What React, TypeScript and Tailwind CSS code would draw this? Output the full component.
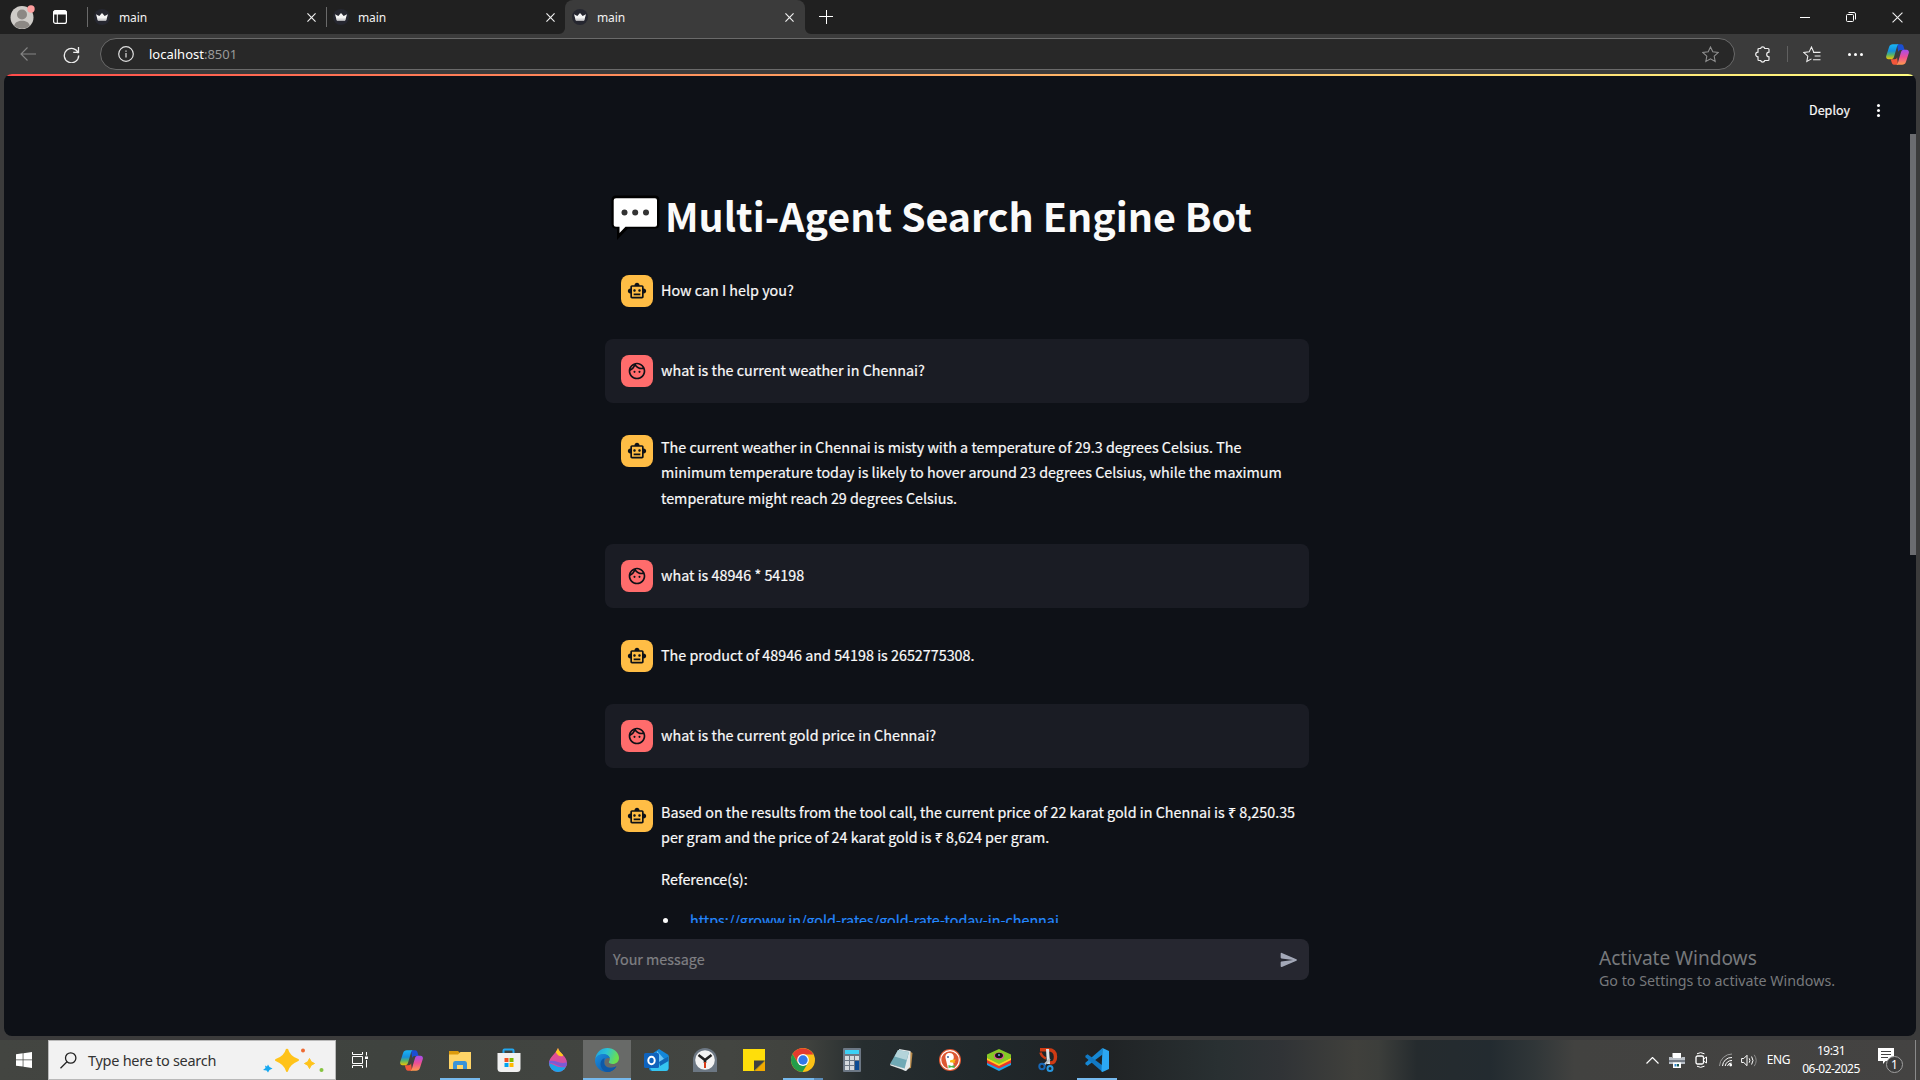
import React from "react";
import { MdOutlineFace, MdOutlineSmartToy } from "react-icons/md";

const chatFont = "font-['Noto_Sans_CJK_SC','Noto_Sans',sans-serif]";

function CrownIcon() {
  return (
    <svg width="16" height="16" viewBox="0 0 16 16" className="shrink-0">
      <circle cx="8" cy="8" r="8" fill="#262730" />
      <path d="M2 5.2 5.3 7 8 4l2.700 3L14 5.200 12.200 11.600H3.800Z" fill="#f5f5f5" />
      <path d="M3.600 9.400h8.800l-.4 2.200H4z" fill="#d2d2d4" />
    </svg>
  );
}

function CloseIcon({ size = 9, stroke = 1.3 }: { size?: number; stroke?: number }) {
  return (
    <svg width={size} height={size} viewBox="0 0 10 10" className="shrink-0">
      <path d="M.5.5l9 9M9.5.5l-9 9" stroke="#f0f0f0" strokeWidth={stroke} />
    </svg>
  );
}

function Tab({ active = false, divider = false }: { active?: boolean; divider?: boolean }) {
  return (
    <div
      className={
        active
          ? "relative flex h-[34px] w-[240px] items-center rounded-t-lg bg-[#3b3b3b] pr-[11px] pl-[7px]"
          : "flex h-[34px] w-[239px] items-center pr-[10px]"
      }
    >
      {divider && <div className="mr-[6px] h-5 w-px bg-[#6a6a6a]" />}
      {active && (
        <>
          <svg width="6" height="6" viewBox="0 0 6 6" className="absolute bottom-0 -left-[6px]">
            <path d="M6 0v6H0A6 6 0 0 0 6 0" fill="#3b3b3b" />
          </svg>
          <svg width="6" height="6" viewBox="0 0 6 6" className="absolute -right-[6px] bottom-0">
            <path d="M0 0v6h6A6 6 0 0 1 0 0" fill="#3b3b3b" />
          </svg>
        </>
      )}
      <CrownIcon />
      <span className="mt-px ml-[9px] flex-1 text-[12px] leading-4 tracking-[-0.1px] text-[#f2f2f2]">main</span>
      <CloseIcon />
    </div>
  );
}

function CopilotIcon({ id }: { id: string }) {
  return (
    <svg width="23" height="21" viewBox="0 0 23 21" className="shrink-0">
      <defs>
        <linearGradient id={id + "a"} x1="0" y1="0" x2="0" y2="1">
          <stop offset="0" stopColor="#19b5f5" />
          <stop offset=".45" stopColor="#1590dc" />
          <stop offset=".7" stopColor="#56b36a" />
          <stop offset="1" stopColor="#f5c400" />
        </linearGradient>
        <linearGradient id={id + "b"} x1="0" y1="0" x2="0" y2="1">
          <stop offset="0" stopColor="#a34df0" />
          <stop offset=".5" stopColor="#ee4f93" />
          <stop offset="1" stopColor="#ff9a4d" />
        </linearGradient>
      </defs>
      <path d="M11 .3h4.200c1.500 0 2 1 2.500 2.600l.9 3h-4c-1.300 0-1.900.8-2.300 2z" fill="#1b4fd3" />
      <path d="M12 20.700H8c-1.500 0-2-1-2.500-2.600l-.7-2.800h4c1.300 0 1.900-.8 2.300-2z" fill="#f2563a" />
      <path d="M6.800.3H13c-1.400.2-1.800 1.500-2.200 3L8.200 12.300c-.5 1.900-1.300 3-3.400 3H2.500C.5 15.300-.2 13.600.2 12L3 3.200C3.700 1 5 .3 6.800.3" fill={"url(#" + id + "a)"} />
      <path d="M16.200 20.700H10c1.400-.2 1.800-1.500 2.200-3l2.600-9c.5-1.900 1.300-3 3.400-3h2.300c2 0 2.700 1.700 2.300 3.300L20 17.800c-.7 2.200-2 2.900-3.800 2.900" fill={"url(#" + id + "b)"} />
    </svg>
  );
}

const starPath = "M8 .9l2.150 4.600 5 .65-3.700 3.450.95 5L8 12.150 3.600 14.600l.95-5L.85 6.150l5-.65z";

function TitleBar() {
  return (
    <div className="flex h-[34px] items-center bg-[#202020]">
      <div className="flex w-[87px] items-center pl-[10px]">
        <svg width="25" height="26" viewBox="0 0 25 26">
          <circle cx="12" cy="13.500" r="11.500" fill="#cfccc8" />
          <circle cx="12" cy="10.500" r="5" fill="#8c8884" />
          <path d="M4.200 21.800c.8-3.600 4-5 7.800-5s7 1.400 7.800 5a11.500 11.500 0 0 1-15.600 0" fill="#8c8884" />
          <circle cx="21" cy="5" r="3.700" fill="#ff9e9e" />
        </svg>
        <svg width="14" height="14" viewBox="0 0 14 14" className="ml-[18px]">
          <rect x=".6" y=".6" width="12.800" height="12.800" rx="2" fill="none" stroke="#fff" strokeWidth="1.200" />
          <path d="M1 1h12v3H1zM4.300 3v10" fill="#fff" stroke="#fff" strokeWidth="1" />
        </svg>
      </div>
      <Tab divider />
      <Tab divider />
      <Tab active />
      <svg width="14" height="14" viewBox="0 0 14 14" className="ml-[14px]">
        <path d="M0 6.500h14M7.500 0v14" stroke="#fff" />
      </svg>
      <div className="ml-auto flex items-center text-white">
        <div className="flex w-[46px] justify-center">
          <div className="h-px w-[10px] bg-white" />
        </div>
        <div className="flex w-[46px] justify-center">
          <svg width="10" height="10" viewBox="0 0 10 10" fill="none" stroke="#fff">
            <rect x=".5" y="2.500" width="7" height="7" rx="1" />
            <path d="M2.500.5H8A1.500 1.500 0 0 1 9.500 2v5.500" />
          </svg>
        </div>
        <div className="flex w-[46px] justify-center">
          <CloseIcon size={11} stroke={1} />
        </div>
      </div>
    </div>
  );
}

function Toolbar() {
  return (
    <div className="flex h-[40px] items-center bg-[#3b3b3b]">
      <div className="flex w-[100px] shrink-0 items-center pl-[20px]">
        <svg width="16" height="14" viewBox="0 0 16 14" fill="none" stroke="#858585" strokeWidth="1.100">
          <path d="M16 7H1M7.500.5 1 7l6.500 6.500" />
        </svg>
        <svg width="17" height="17" viewBox="0 0 17 17" fill="none" stroke="#ededed" strokeWidth="1.300" className="ml-[27px]">
          <path d="M15.300 7.200A7.200 7.200 0 1 0 15.700 9.500M15.500 1v5.300h-5.300" />
        </svg>
      </div>
      <div className="flex h-8 w-[1635px] shrink-0 items-center rounded-full border border-[#6a6a6a] bg-[#282828] pr-[15px] pl-[17px]">
        <svg width="16" height="16" viewBox="0 0 16 16" fill="none" stroke="#e0e0e0" strokeWidth="1.200">
          <circle cx="8" cy="8" r="7.300" />
          <path d="M8 7v4.500M8 4.400v1.400" />
        </svg>
        <span className="ml-[15px] flex-1 text-[13px] leading-5 text-white">
          localhost<span className="text-[#9a9a9a]">:8501</span>
        </span>
        <svg width="17" height="17" viewBox="0 0 16 16" fill="none" stroke="#8f8f8f">
          <path d={starPath} />
        </svg>
      </div>
      <svg width="16" height="17" viewBox="0 0 16 17" fill="none" stroke="#f0f0f0" strokeWidth="1.200" className="ml-[20px] shrink-0">
        <path d="M4 2.500h1.600a2.200 2.200 0 0 1 4.200 0H13a1 1 0 0 1 1 1v2.700a2.300 2.300 0 0 0 0 4.600v2.700a1 1 0 0 1-1 1H9.800a2.200 2.200 0 0 1-4.200 0H4a1 1 0 0 1-1-1v-2.700a2.300 2.300 0 0 1 0-4.600V3.500a1 1 0 0 1 1-1" />
      </svg>
      <div className="ml-[16px] h-4 w-px shrink-0 bg-[#606060]" />
      <svg width="18" height="17" viewBox="0 0 17 16" fill="none" stroke="#f0f0f0" className="ml-[15px] shrink-0">
        <path d="M10 5.400 8 .9 5.850 5.500l-5 .65 3.700 3.450-.95 5L8 12.150M9.500 6h7M11 9.500h5.500M9.500 13h7" />
      </svg>
      <div className="ml-[27px] flex shrink-0 gap-[3px]">
        <div className="size-[3px] rounded-full bg-white" />
        <div className="size-[3px] rounded-full bg-white" />
        <div className="size-[3px] rounded-full bg-white" />
      </div>
      <div className="ml-[23px] shrink-0">
        <CopilotIcon id="tool" />
      </div>
    </div>
  );
}

function Message({ user = false, children }: { user?: boolean; children: React.ReactNode }) {
  return (
    <div className={user ? "flex shrink-0 gap-2 rounded-lg bg-[#1a1c24] p-4" : "flex shrink-0 gap-2 p-4"}>
      <div
        className={
          user
            ? "flex size-8 shrink-0 items-center justify-center rounded-lg bg-[#ff6c6c] text-[#0e1117]"
            : "flex size-8 shrink-0 items-center justify-center rounded-lg bg-[#ffbd45] text-[#0e1117]"
        }
      >
        {user ? <MdOutlineFace size={20} /> : <MdOutlineSmartToy size={20} />}
      </div>
      <div className="-mt-[1.200px] mb-[1.200px] flex flex-col justify-center gap-4 text-[14.330px] leading-[25.600px] whitespace-nowrap [-webkit-text-stroke:0.2px]">
        {children}
      </div>
    </div>
  );
}

function ChatPage() {
  return (
    <div className="relative mx-1 flex h-[962px] flex-col overflow-hidden rounded-lg bg-[#0e1117] text-[#fafafa]">
      <div className="h-[2px] shrink-0 bg-linear-to-r from-[#ff4b4b] to-[#fffd80]" />
      <div className={"flex h-[68px] shrink-0 items-center justify-end pr-[36px] text-[12.530px] [-webkit-text-stroke:0.2px] " + chatFont}>
        <span>Deploy</span>
        <div className="ml-[27px] flex flex-col gap-[2px]">
          <div className="size-[3px] rounded-full bg-white" />
          <div className="size-[3px] rounded-full bg-white" />
          <div className="size-[3px] rounded-full bg-white" />
        </div>
      </div>
      <div className={"ml-[601px] flex h-[779px] w-[704px] shrink-0 flex-col gap-4 overflow-hidden pt-[43px] " + chatFont}>
        <h1 className="flex h-[56px] shrink-0 items-start pt-[8px] pl-[6px]">
          <svg width="49" height="46" viewBox="0 0 49 46" className="shrink-0">
            <path d="M5 .5h39q4.500 0 4.500 4.500v24q0 4.500-4.500 4.500H17L6 45V33.500H5Q.5 33.500.5 29V5Q.5.500 5 .5Z" fill="#000" />
            <path d="M5 3.300h39q2 0 2 2v24.500q0 2-2 2H14.500L8.500 38v-6.200H5q-2.300 0-2.300-2V5.300q0-2 2.300-2Z" fill="#fff" />
            <circle cx="13.500" cy="17.500" r="3" fill="#333" />
            <circle cx="24.200" cy="17.500" r="3" fill="#333" />
            <circle cx="35" cy="17.500" r="3" fill="#333" />
          </svg>
          <span className="-mt-[6px] ml-[5px] text-[39.400px] leading-[52px] font-bold whitespace-nowrap">
            Multi-Agent Search Engine Bot
          </span>
        </h1>
        <Message>
          <p>How can I help you?</p>
        </Message>
        <Message user>
          <p>what is the current weather in Chennai?</p>
        </Message>
        <Message>
          <p>
            The current weather in Chennai is misty with a temperature of 29.3 degrees Celsius. The
            <br />
            minimum temperature today is likely to hover around 23 degrees Celsius, while the maximum
            <br />
            temperature might reach 29 degrees Celsius.
          </p>
        </Message>
        <Message user>
          <p>what is 48946 * 54198</p>
        </Message>
        <Message>
          <p>The product of 48946 and 54198 is 2652775308.</p>
        </Message>
        <Message user>
          <p>what is the current gold price in Chennai?</p>
        </Message>
        <Message>
          <p>
            Based on the results from the tool call, the current price of 22 karat gold in Chennai is ₹ 8,250.35
            <br />
            per gram and the price of 24 karat gold is ₹ 8,624 per gram.
          </p>
          <p>Reference(s):</p>
          <ul>
            <li className="flex items-center">
              <span className="ml-[2px] size-[5px] rounded-full bg-[#fafafa]" />
              <a className="ml-[22px] text-[#2489ff] underline">https://groww.in/gold-rates/gold-rate-today-in-chennai</a>
            </li>
          </ul>
        </Message>
      </div>
      <div className={"mt-4 ml-[601px] flex h-[41px] w-[704px] shrink-0 items-center justify-between rounded-lg bg-[#262730] pr-[10px] pl-2 text-[14.330px] text-[#808084] [-webkit-text-stroke:0.2px] " + chatFont}>
        <span className="-mt-px">Your message</span>
        <svg width="20" height="20" viewBox="0 0 24 24" fill="#a3a8b8">
          <path d="m3.400 20.400 17.450-7.480a1 1 0 0 0 0-1.840L3.400 3.600a.993.993 0 0 0-1.390.91L2 9.120c0 .5.37.93.87.99L17 12 2.870 13.880c-.5.07-.87.5-.87 1l.01 4.610c0 .71.73 1.200 1.390.91" />
        </svg>
      </div>
      <div className="absolute top-[60px] right-0 h-[421px] w-[6px] bg-[#6b6c70]" />
      <div className="absolute top-[871px] left-[1595px] whitespace-nowrap text-[#77797c]">
        <div className="text-[19.100px] leading-[27px]">Activate Windows</div>
        <div className="-mt-px text-[14.260px] leading-[19px]">Go to Settings to activate Windows.</div>
      </div>
    </div>
  );
}

function StoreIcon() {
  return (
    <svg width="24" height="24" viewBox="0 0 24 24">
      <path d="M6.500 6V2.500q0-1 1-1h8q1 0 1 1V6" fill="none" stroke="#22a7f0" strokeWidth="2" />
      <path d="M.5 5h23v15.500q0 3.500-3.500 3.500H4Q.5 24 .5 20.500Z" fill="#f1f1f1" />
      <path d="M7.500 10h4v4h-4z" fill="#f25022" />
      <path d="M12.500 10h4v4h-4z" fill="#7fba00" />
      <path d="M7.500 15h4v4h-4z" fill="#00a4ef" />
      <path d="M12.500 15h4v4h-4z" fill="#ffb900" />
    </svg>
  );
}

function DropIcon() {
  return (
    <svg width="20" height="24" viewBox="0 0 20 24">
      <defs>
        <linearGradient id="drop" x1="0" y1="0" x2=".3" y2="1">
          <stop offset=".2" stopColor="#e94f8a" />
          <stop offset="1" stopColor="#c54fb0" />
        </linearGradient>
        <clipPath id="dropClip">
          <path d="M10 0c1 5 9 8 9 15a9 9 0 0 1-18 0C1 9 8 6 10 0" />
        </clipPath>
      </defs>
      <g clipPath="url(#dropClip)">
        <path d="M0 0h20v24H0z" fill="url(#drop)" />
        <path d="M5 0h10v8q-4 1-6-2z" fill="#ffc91f" />
        <path d="M0 13q5-1 10 1t10 0v4q-6 2-11-1T0 16z" fill="#7b5bd6" />
        <path d="M0 15q5 1 8 3t11 1v6H0z" fill="#1ba4ea" />
      </g>
    </svg>
  );
}

function EdgeIcon() {
  return (
    <svg width="24" height="24" viewBox="0 0 24 24">
      <defs>
        <linearGradient id="edgeTop" x1="0" y1="0" x2="1" y2=".3">
          <stop offset="0" stopColor="#1b9de2" />
          <stop offset=".5" stopColor="#2cc3d6" />
          <stop offset="1" stopColor="#6ae04e" />
        </linearGradient>
        <linearGradient id="edgeLow" x1="0" y1="0" x2="1" y2="1">
          <stop offset="0" stopColor="#1a8fe0" />
          <stop offset="1" stopColor="#0c4fa0" />
        </linearGradient>
      </defs>
      <path d="M.3 11C1 4.500 6 0 12.300 0 19 0 24 4.600 24 10c0 3.800-2.900 6-6.200 6-2.700 0-4-.9-4-1.900 0-.8 1-1.300 1-3.200C14.800 8.300 12 6.500 8.500 6.500 4.500 6.500 1.500 8.500.3 11" fill="url(#edgeTop)" />
      <path d="M0 12.500C.3 8.500 4 6 8.300 6c3.600 0 6.300 1.900 6.500 4.400-2.500-1.300-5.600.6-5.600 4 0 4.500 5.300 7.300 12.300 3.800C19.400 21.700 16 24 12 24 5.200 24 0 18.700 0 12.500" fill="url(#edgeLow)" />
      <path d="M9.200 14.400c0 4.500 5.300 7.300 12.300 3.800C19.400 21.700 16 24 12 24 8 23 5.500 19.500 5.500 16c0-3 1.500-5 4-6-.3 1.500-.3 2.800-.3 4.400" fill="#0d59a8" />
    </svg>
  );
}

function OutlookIcon() {
  return (
    <svg width="25" height="24" viewBox="0 0 25 24">
      <path d="M5 8 15 1l9.500 6v13q0 3-3 3H8q-3 0-3-3z" fill="#1287db" />
      <path d="m13 3 8 9-8 5z" fill="#6ac3f5" />
      <path d="M24.500 8v12q0 3-3 3H8l-2-3z" fill="#35c5f0" />
      <path d="M15 14 24.500 8v5L16 18z" fill="#1068b8" />
      <rect y="5" width="15" height="15" rx="1.500" fill="#0f63bd" />
      <ellipse cx="7.500" cy="12.500" rx="3.200" ry="3.700" fill="none" stroke="#fff" strokeWidth="2" />
    </svg>
  );
}

function ClockIcon() {
  return (
    <svg width="24" height="24" viewBox="0 0 24 24">
      <path d="M0 24V12a12 12 0 0 1 24 0v12z" fill="#6c7783" />
      <circle cx="12" cy="12" r="9.800" fill="#f3f3f3" />
      <path d="m5.500 7 6.500 5 6.500-5M12 12v3" fill="none" stroke="#222" strokeWidth="2.600" />
      <path d="M12 14v6" stroke="#d83b16" strokeWidth="2" />
    </svg>
  );
}

function StickyIcon() {
  return (
    <svg width="22" height="22" viewBox="0 0 22 22">
      <path d="M0 0h22v12L12 22H0z" fill="#ffde0a" />
      <path d="M22 12v10H12z" fill="#f2a900" />
      <path d="M11 11.500h11L11 22z" fill="#3f3f41" />
    </svg>
  );
}

function ChromeIcon() {
  return (
    <svg width="24" height="24" viewBox="0 0 24 24">
      <circle cx="12" cy="12" r="12" fill="#fbc116" />
      <path d="M1.600 6A12 12 0 0 1 22.400 6.500H12L7 15z" fill="#e33b2e" />
      <path d="M1.600 6 6.900 15 12 17.500 17 15l-5.500 9A12 12 0 0 1 1.600 6" fill="#239d4b" />
      <circle cx="12" cy="12" r="5.900" fill="#fff" />
      <circle cx="12" cy="12" r="4.700" fill="#3178e8" />
    </svg>
  );
}

function CalculatorIcon() {
  return (
    <svg width="18" height="24" viewBox="0 0 18 24">
      <rect width="18" height="24" rx="1" fill="#6c7784" />
      <path d="M2 2h14v4H2z" fill="#3cd0f5" />
      <path d="M2 8h4v4H2zM7 8h4v4H7zM12 8h4v4h-4zM2 13h4v4H2zM7 13h4v4H7zM2 18h4v4H2zM7 18h4v4H7z" fill="#d5dade" />
      <path d="M12 13h4v9h-4z" fill="#0c4c94" />
    </svg>
  );
}

function NotepadIcon() {
  return (
    <svg width="23" height="22" viewBox="0 0 23 22">
      <path d="M20 2.500 22.500 4 21 19l-4 1z" fill="#b98a4a" />
      <path d="m9 0 11.500 2L20 18l-4 4-3-1z" fill="#e4e9ea" />
      <path d="M8 1 19 3l-4.500 17L0 15z" fill="#6fa9b5" />
      <path d="M8 1 19 3l-2.500 8L4.500 7.500z" fill="#b4d4da" />
      <path d="m0 15 14.500 4.500 2 2.500L.5 16.500z" fill="#dfe6e8" />
    </svg>
  );
}

function DuckIcon() {
  return (
    <svg width="22" height="22" viewBox="0 0 22 22">
      <circle cx="11" cy="11" r="11" fill="#de5833" />
      <circle cx="11" cy="11" r="9.300" fill="none" stroke="#fff" strokeWidth="1.200" />
      <path d="M9 19.500 6.500 9C6 5.500 8 4 10.500 4c3 0 4.500 2 4.300 4.500L14 12l1 7.500q-3 1-6 0" fill="#fff" />
      <path d="M11 11.500q3-1.500 6-.8l-1.500 1.500 1 1.300q-3 .5-5.500-.3z" fill="#fdb913" />
      <path d="m9.500 16 3 1 3-1v3l-3-.7-3 .7z" fill="#4cb748" />
      <circle cx="9" cy="8" r=".9" fill="#2d4f8e" />
    </svg>
  );
}

function LayersIcon() {
  return (
    <svg width="24" height="22" viewBox="0 0 24 22">
      <path d="M0 12.500 12 18l12-5.500V16l-12 6L0 16z" fill="#1ca0e8" />
      <path d="M0 10.500 12 16l12-5.500v3.500L12 19.500 0 14z" fill="#e8352c" />
      <path d="M0 8.500 12 14l12-5.500v2.500L12 17 0 11z" fill="#ffd21f" />
      <path d="M12 0 24 5.500V9l-12 6L0 9V5.500z" fill="#85c926" />
      <ellipse cx="12" cy="7" rx="5" ry="3.400" fill="#e44fa0" />
      <ellipse cx="12" cy="6.500" rx="3.900" ry="2.700" fill="#151515" />
      <circle cx="12" cy="6" r="1" fill="#55b7e8" />
    </svg>
  );
}

function SnipIcon() {
  return (
    <svg width="20" height="24" viewBox="0 0 20 24">
      <path d="M2 1.700h8q7.500 0 7.500 7t-6 6" fill="none" stroke="#cf3b14" strokeWidth="3.400" />
      <path d="M2.500 4.500q1 4 5.500 6" fill="none" stroke="#cf3b14" strokeWidth="2.500" />
      <path d="M9.500 1 10.500 16" stroke="#dce3e8" strokeWidth="3" />
      <path d="m12 11-6 6" stroke="#b7c0c8" strokeWidth="2" />
      <circle cx="4" cy="18.500" r="2.700" fill="none" stroke="#1768b8" strokeWidth="2" />
      <circle cx="12" cy="20.500" r="2.500" fill="none" stroke="#2898e0" strokeWidth="2" />
    </svg>
  );
}

function CodeIcon() {
  return (
    <svg width="24" height="24" viewBox="0 0 24 24">
      <path d="M17.500 6.500 2.600 17.700.4 16.300v-1.500L17.500 0z" fill="#1688d4" />
      <path d="M17.500 17.500 2.600 6.300.4 7.700v1.500L17.500 24z" fill="#1279c4" />
      <path d="M17.500 0 24 3v18l-6.500 3-1-.5z" fill="#2ba7f3" />
    </svg>
  );
}

function FolderIcon() {
  return (
    <svg width="22" height="18" viewBox="0 0 22 18">
      <path d="M0 0h9l2 2v4H0z" fill="#dc9a0c" />
      <path d="M0 3.500h9L11.500 1H22v17H0z" fill="#ffd467" />
      <path d="M4 18v-5.500Q4 10 6 10h10q2 0 2 2.500V18h-4v-4H8v4z" fill="#3a93d8" />
    </svg>
  );
}

const apps: { icon: React.ReactNode; slot?: string; line?: string; label: string }[] = [
  { label: "Copilot", icon: <CopilotIcon id="task" /> },
  { label: "Files", icon: <FolderIcon />, line: "left-1 w-10" },
  { label: "Store", icon: <StoreIcon /> },
  { label: "Paint", icon: <DropIcon /> },
  { label: "Edge", icon: <EdgeIcon />, slot: "bg-[#686a68]", line: "left-0 w-12" },
  { label: "Outlook", icon: <OutlookIcon /> },
  { label: "Clock", icon: <ClockIcon /> },
  { label: "Notes", icon: <StickyIcon /> },
  { label: "Chrome", icon: <ChromeIcon />, line: "left-1 w-10 border-r-[9px] border-[#5a8cb8]" },
  { label: "Calculator", icon: <CalculatorIcon /> },
  { label: "Notepad", icon: <NotepadIcon /> },
  { label: "DuckDuckGo", icon: <DuckIcon /> },
  { label: "BlueStacks", icon: <LayersIcon /> },
  { label: "Snip", icon: <SnipIcon /> },
  { label: "Code", icon: <CodeIcon />, line: "left-1 w-10" },
];

function Taskbar() {
  return (
    <div className="flex h-10 items-center bg-[linear-gradient(90deg,#434541_0%,#3f433f_20%,#434541_38%,#40423e_42%,#262d2f_45%,#20272a_52%,#1f2224_57.300%,#293032_63.500%,#303336_66.700%,#40403c_70.600%,#3c3e3b_71.800%,#252b2e_73.800%,#232b30_77.600%,#303638_79.900%,#424240_82%,#444342_100%)] text-white">
      <div className="flex w-12 justify-center">
        <svg width="16" height="16" viewBox="0 0 16 16" fill="#fff">
          <path d="M0 2.300 6.700 1.300v6.300H0zM7.400 1.200 16 0v7.600H7.400zM0 8.300h6.700v6.300L0 13.700zM7.400 8.300H16V16l-8.600-1.200z" />
        </svg>
      </div>
      <div className="flex h-10 w-72 items-center border border-[#b9b9b9] bg-[#f2f2f2] pl-[11px]">
        <svg width="17" height="17" viewBox="0 0 17 17" fill="none" stroke="#222" strokeWidth="1.300">
          <circle cx="10.700" cy="6" r="5.200" />
          <path d="M7 9.800.5 16.300" />
        </svg>
        <span className="ml-[11px] text-[14.500px] leading-5 tracking-[-0.280px] text-[#333]">Type here to search</span>
        <svg width="62" height="26" viewBox="0 0 62 26" className="mr-[10px] ml-auto">
          <path d="M24 2q2 8 11 11-9 3.500-11 11-2-7.500-11-11 9-3 11-11" fill="#ffc31a" stroke="#ffc31a" strokeWidth="2" strokeLinejoin="round" />
          <path d="M46.500 11.500q1 4 5 5-4 1-5 5-1-4-5-5 4-1 5-5" fill="#ffc31a" stroke="#ffc31a" strokeLinejoin="round" />
          <path d="M5 17.500 6.500 20l3 1.500-3 1.500L5 25.500l-1.500-2-3.500-.5 2.500-2-.5-2.500 2 1z" fill="#16a8f0" />
          <circle cx="40" cy="3.500" r="2" fill="#ee6a33" />
          <circle cx="58.500" cy="23" r="2" fill="#86c440" />
        </svg>
      </div>
      <div className="flex w-12 justify-center">
        <svg width="16" height="16" viewBox="0 0 16 16" fill="none" stroke="#fff">
          <path d="M.5 0v2.500h10V0M.5 16v-2.500h10V16M.5 4.500h10v7H.5zM14.500 0v3.500M14.500 8v7.500" />
          <path d="M13 4.500h3v2.500h-3z" fill="#fff" stroke="none" />
        </svg>
      </div>
      <div className="ml-[3px] flex gap-px">
        {apps.map((app) => (
          <div key={app.label} className={"relative flex h-10 w-12 items-center justify-center " + (app.slot ?? "")}>
            {app.icon}
            {app.line && <div className={"absolute bottom-0 h-[2px] bg-[#76b9ed] " + app.line} />}
          </div>
        ))}
      </div>
      <div className="ml-auto flex h-10 items-center">
        <svg width="13" height="7" viewBox="0 0 13 7" fill="none" stroke="#fff" strokeWidth="1.200">
          <path d="m.5 6.500 6-6 6 6" />
        </svg>
        <svg width="16" height="15" viewBox="0 0 16 15" className="ml-[10px]">
          <path d="M3.500 0h8.500v5H3.500z" fill="#fff" />
          <path d="M0 4h3v1h9.500V4H16v7H0z" fill="#b9bfc6" />
          <path d="M0 7h16v2H0z" fill="#737a84" />
          <path d="M4 9.500h8V15H4z" fill="#fff" />
          <path d="M5.500 11h2v2.500h-2z" fill="#2e84cf" />
          <path d="M8 11h2v2.500H8z" fill="#1c5c52" />
        </svg>
        <svg width="13" height="16" viewBox="0 0 13 16" fill="none" stroke="#fff" className="ml-[10px]">
          <rect x="1" y="4" width="7.500" height="8" rx="1.500" strokeWidth="1.300" />
          <path d="m8.500 7 3-2v6l-3-2M2 1.800Q5.500-.5 9.500 1.800M2 14.200q3.500 2.300 7.500 0" />
        </svg>
        <svg width="14" height="14" viewBox="0 0 14 14" fill="none" stroke="#fff" className="ml-[11px]">
          <path d="M.5 13A12.500 12.500 0 0 1 13 1" stroke="#9a9a9a" />
          <path d="M3.500 13A9 9 0 0 1 13 4.500M6.200 13A6.500 6.500 0 0 1 13 7.500" />
          <path d="M8.500 13a4 4 0 0 1 4-3" />
          <circle cx="11.700" cy="12" r="1.400" fill="#fff" stroke="none" />
        </svg>
        <svg width="17" height="13" viewBox="0 0 17 13" fill="none" stroke="#fff" className="ml-[8px]">
          <path d="M.6 4.500h2.200L6 1.300v10.400L2.800 8.500H.6z" />
          <path d="M8.200 4.300q1.400 2.200 0 4.400M10.600 2.500q2.800 4 0 8" />
          <path d="M13.200.8q4 5.700 0 11.400" stroke="#8a8a8a" />
        </svg>
        <span className="ml-[9px] text-[12px] leading-4 tracking-[-0.4px]">ENG</span>
        <div className="ml-[10px] flex w-[62px] flex-col items-center text-[12px] leading-[18px] tracking-[-0.5px]">
          <span>19:31</span>
          <span>06-02-2025</span>
        </div>
        <div className="relative ml-[16px] h-[26px] w-[25px]">
          <svg width="17" height="16" viewBox="0 0 17 16" className="mt-px">
            <path d="M0 0h16v13H7.500L5 16v-3H0z" fill="#fff" />
            <path d="M3 3.500h10M3 6.500h10M3 9.500h7" stroke="#444" />
          </svg>
          <div className="absolute right-0 bottom-0 flex size-[17px] items-center justify-center rounded-full border border-[#a0a0a0] bg-[#3c3c3c] text-[12px] leading-none">
            1
          </div>
        </div>
        <div className="ml-[12px] h-10 w-px bg-[#8a8a8a]" />
        <div className="w-1" />
      </div>
    </div>
  );
}

export default function App() {
  return (
    <div className="flex h-[1080px] w-[1920px] flex-col overflow-hidden bg-[#3b3b3b] font-['Noto_Sans',sans-serif]">
      <TitleBar />
      <Toolbar />
      <ChatPage />
      <div className="h-1 shrink-0" />
      <Taskbar />
    </div>
  );
}
